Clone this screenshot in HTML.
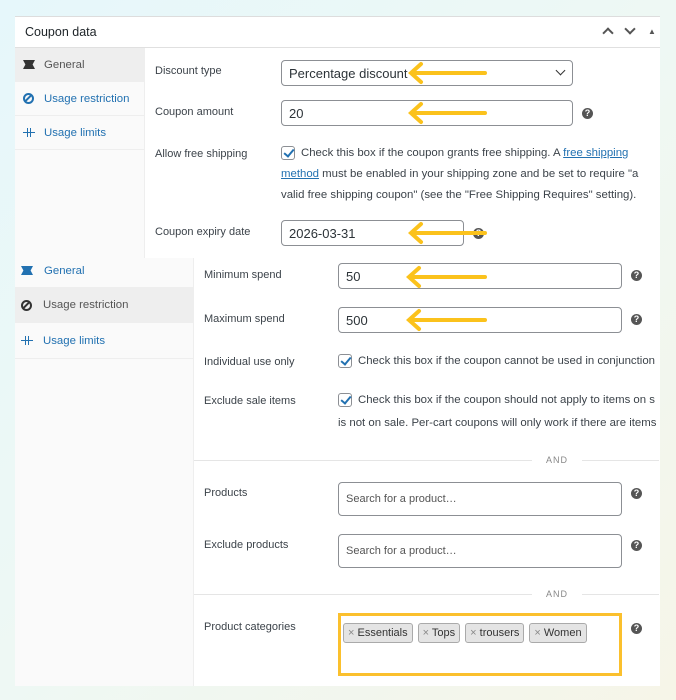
<!DOCTYPE html>
<html><head><style>
*{box-sizing:border-box;margin:0;padding:0}
body{width:676px;height:700px;overflow:hidden;position:relative;font-family:"Liberation Sans",sans-serif;background:linear-gradient(135deg,#e6f7fb 0%,#eef8f4 50%,#f6f5e8 100%);color:#3c434a}
.a{position:absolute}
.lbl{position:absolute;font-size:11px;color:#3c434a}
.inp{position:absolute;border:1px solid #8c8f94;border-radius:4px;background:#fff;font-size:13px;color:#2c3338;padding-left:7px;display:flex;align-items:center}
.help{position:absolute;width:11px;height:11px;border-radius:50%;background:#555;color:#fff;font-size:9px;font-weight:bold;text-align:center;line-height:11px}
.cb{position:absolute;width:14px;height:14px;border:1px solid #8c8f94;border-radius:3px;background:#fff}
.cb:after{content:"";position:absolute;left:4px;top:0px;width:4px;height:8px;border:solid #2271b1;border-width:0 2px 2px 0;transform:rotate(40deg)}
.txt{position:absolute;font-size:11.4px;color:#3c434a;white-space:nowrap}
.link{color:#2271b1;text-decoration:underline}
.nav{position:absolute;font-size:11.4px;color:#2271b1;display:flex;align-items:center;border-bottom:1px solid #eee}
.tag{display:inline-block;border:1px solid #aaa;border-radius:3px;background:#e4e4e4;font-size:11px;padding:3px 4px;margin-right:5px;color:#333}
.lim{display:inline-block;width:12px;height:9px;position:relative}
.lim:before{content:"";position:absolute;left:0;right:0;top:4px;height:1px;background:currentColor}
.lim:after{content:"";position:absolute;left:4px;width:2px;top:0;bottom:0;border-left:1px solid currentColor;border-right:1px solid currentColor}
</style></head><body>
<div class="a" style="left:15px;top:16px;width:645px;height:242px;background:#fff;border-top:1px solid #ddd"></div>
<div class="a" style="left:15px;top:47px;width:645px;height:1px;background:#e0e0e0"></div>
<div class="txt" style="left:25px;top:25px;font-size:12.5px;color:#1d2327">Coupon data</div>
<div class="a" style="left:604px;top:29px;width:8px;height:8px;border:solid #555;border-width:2px 0 0 2px;transform:rotate(45deg)"></div>
<div class="a" style="left:626px;top:25px;width:8px;height:8px;border:solid #555;border-width:0 2px 2px 0;transform:rotate(45deg)"></div>
<div class="txt" style="left:648px;top:27px;font-size:8px;color:#555">&#9650;</div>
<div class="a" style="left:15px;top:48px;width:130px;height:210px;background:#fafafa;border-right:1px solid #eee"></div>
<div class="nav" style="left:15px;top:48px;width:130px;height:34px;background:#eee;color:#555;padding-left:8px"><span style="display:inline-block;width:12px;height:9px;background:#333;margin-right:9px;clip-path:polygon(0 0,100% 0,80% 50%,100% 100%,0 100%,20% 50%)"></span>General</div>
<div class="nav" style="left:15px;top:82px;width:130px;height:34px;padding-left:8px"><span style="display:inline-block;width:11px;height:11px;border:2px solid #2271b1;border-radius:50%;margin-right:10px;position:relative"><span style="position:absolute;left:2px;top:-1px;width:2px;height:9px;background:#2271b1;transform:rotate(45deg)"></span></span>Usage restriction</div>
<div class="nav" style="left:15px;top:116px;width:130px;height:34px;padding-left:8px"><span class="lim" style="margin-right:9px"></span>Usage limits</div>

<div class="lbl" style="left:155px;top:65px">Discount type</div>
<div class="inp" style="left:281px;top:60px;width:292px;height:26px">Percentage discount<span style="position:absolute;right:8px;top:6px;width:7px;height:7px;border:solid #333;border-width:0 1.5px 1.5px 0;transform:rotate(45deg)"></span></div>
<div class="lbl" style="left:155px;top:106px">Coupon amount</div>
<div class="inp" style="left:281px;top:100px;width:292px;height:26px">20</div>
<div class="help" style="left:582px;top:108px">?</div>
<div class="lbl" style="left:155px;top:148px">Allow free shipping</div>
<div class="cb" style="left:281px;top:146px"></div>
<div class="txt" style="left:301px;top:147px">Check this box if the coupon grants free shipping. A <span class="link">free shipping</span></div>
<div class="txt" style="left:281px;top:168px"><span class="link">method</span> must be enabled in your shipping zone and be set to require "a</div>
<div class="txt" style="left:281px;top:189px">valid free shipping coupon" (see the "Free Shipping Requires" setting).</div>
<div class="lbl" style="left:155px;top:226px">Coupon expiry date</div>
<div class="inp" style="left:281px;top:220px;width:183px;height:26px">2026-03-31</div>
<div class="help" style="left:473px;top:228px">?</div>

<div class="a" style="left:15px;top:258px;width:645px;height:428px;background:#fff"></div>
<div class="a" style="left:15px;top:258px;width:179px;height:428px;background:#fafafa;border-right:1px solid #eee"></div>
<div class="nav" style="left:15px;top:254px;width:179px;height:33px;padding-left:6px;border:0"><span style="display:inline-block;width:12px;height:9px;background:#2271b1;margin-right:11px;clip-path:polygon(0 0,100% 0,80% 50%,100% 100%,0 100%,20% 50%)"></span>General</div>
<div class="nav" style="left:15px;top:287px;width:179px;height:36px;background:#eee;color:#555;padding-left:6px;border:0"><span style="display:inline-block;width:11px;height:11px;border:2px solid #333;border-radius:50%;margin-right:11px;position:relative"><span style="position:absolute;left:2px;top:-1px;width:2px;height:9px;background:#333;transform:rotate(45deg)"></span></span>Usage restriction</div>
<div class="nav" style="left:15px;top:323px;width:179px;height:36px;padding-left:6px"><span class="lim" style="margin-right:10px"></span>Usage limits</div>

<div class="lbl" style="left:204px;top:269px">Minimum spend</div>
<div class="inp" style="left:338px;top:263px;width:284px;height:26px">50</div>
<div class="help" style="left:631px;top:270px">?</div>
<div class="lbl" style="left:204px;top:313px">Maximum spend</div>
<div class="inp" style="left:338px;top:307px;width:284px;height:26px">500</div>
<div class="help" style="left:631px;top:314px">?</div>
<div class="lbl" style="left:204px;top:356px">Individual use only</div>
<div class="cb" style="left:338px;top:354px"></div>
<div class="txt" style="left:358px;top:355px;width:301px;overflow:hidden">Check this box if the coupon cannot be used in conjunction</div>
<div class="lbl" style="left:204px;top:395px">Exclude sale items</div>
<div class="cb" style="left:338px;top:393px"></div>
<div class="txt" style="left:358px;top:394px;width:301px;overflow:hidden">Check this box if the coupon should not apply to items on s</div>
<div class="txt" style="left:338px;top:417px;width:321px;overflow:hidden">is not on sale. Per-cart coupons will only work if there are items</div>
<div class="a" style="left:194px;top:460px;width:465px;height:1px;background:#e5e5e5"></div>
<div class="txt" style="left:532px;top:455px;width:50px;text-align:center;background:#fff;font-size:9px;color:#888;letter-spacing:1px">AND</div>
<div class="lbl" style="left:204px;top:487px">Products</div>
<div class="inp" style="left:338px;top:482px;width:284px;height:34px;font-size:11px;color:#555">Search for a product…</div>
<div class="help" style="left:631px;top:488px">?</div>
<div class="lbl" style="left:204px;top:539px">Exclude products</div>
<div class="inp" style="left:338px;top:534px;width:284px;height:34px;font-size:11px;color:#555">Search for a product…</div>
<div class="help" style="left:631px;top:540px">?</div>
<div class="a" style="left:194px;top:594px;width:465px;height:1px;background:#e5e5e5"></div>
<div class="txt" style="left:532px;top:589px;width:50px;text-align:center;background:#fff;font-size:9px;color:#888;letter-spacing:1px">AND</div>
<div class="lbl" style="left:204px;top:621px">Product categories</div>
<div class="a" style="left:338px;top:613px;width:284px;height:63px;border:3px solid #fbc02d;padding:7px 0 0 2px;white-space:nowrap"><span class="tag"><span style="color:#888">× </span>Essentials</span><span class="tag"><span style="color:#888">× </span>Tops</span><span class="tag"><span style="color:#888">× </span>trousers</span><span class="tag"><span style="color:#888">× </span>Women</span></div>
<div class="help" style="left:631px;top:623px">?</div>

<svg class="a" style="left:0;top:0" width="676" height="700">
<g stroke="#fbc21c" stroke-width="4" stroke-linecap="round" fill="none">
<path d="M412 73H485M421 64L411 73L421 82"/>
<path d="M412 113H485M421 104L411 113L421 122"/>
<path d="M412 233H485M421 224L411 233L421 242"/>
<path d="M410 277H485M419 268L409 277L419 286"/>
<path d="M410 320H485M419 311L409 320L419 329"/>
</g></svg>
</body></html>
